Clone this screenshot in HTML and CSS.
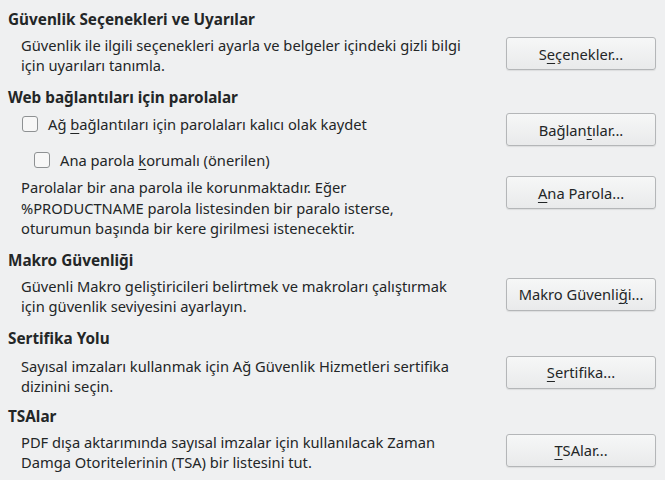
FILE: index.html
```html
<!DOCTYPE html>
<html lang="tr">
<head>
<meta charset="utf-8">
<link rel="stylesheet" href="styles.css">
</head>
<body>
<div class="page">
  <section class="sec s1">
    <h2 class="head">Güvenlik Seçenekleri ve Uyarılar</h2>
    <div class="row">
      <p class="desc">Güvenlik ile ilgili seçenekleri ayarla ve belgeler içindeki gizli bilgi<br>için uyarıları tanımla.</p>
      <button class="btn b1">S<u>e</u>çenekler...</button>
    </div>
  </section>

  <section class="sec s2">
    <h2 class="head">Web bağlantıları için parolalar</h2>
    <div class="row r-cb1">
      <label class="check c1"><span class="box"></span><span class="lbl">Ağ <u>b</u>ağlantıları için parolaları kalıcı olak kaydet</span></label>
      <button class="btn">Bağlan<u>t</u>ılar...</button>
    </div>
    <div class="row r-cb2">
      <label class="check c2"><span class="box"></span><span class="lbl">Ana parola <u>k</u>orumalı (önerilen)</span></label>
    </div>
    <div class="row r-para">
      <p class="desc para">Parolalar bir ana parola ile korunmaktadır. Eğer<br>%PRODUCTNAME parola listesinden bir paralo isterse,<br>oturumun başında bir kere girilmesi istenecektir.</p>
      <button class="btn"><u>A</u>na Parola...</button>
    </div>
  </section>

  <section class="sec s3">
    <h2 class="head">Makro Güvenliği</h2>
    <div class="row">
      <p class="desc">Güvenli Makro geliştiricileri belirtmek ve makroları çalıştırmak<br>için güvenlik seviyesini ayarlayın.</p>
      <button class="btn">Makro Güvenli<u>ğ</u>i...</button>
    </div>
  </section>

  <section class="sec s4">
    <h2 class="head">Sertifika Yolu</h2>
    <div class="row">
      <p class="desc">Sayısal imzaları kullanmak için Ağ Güvenlik Hizmetleri sertifika<br>dizinini seçin.</p>
      <button class="btn"><u>S</u>ertifika...</button>
    </div>
  </section>

  <section class="sec s5">
    <h2 class="head">TSAlar</h2>
    <div class="row">
      <p class="desc">PDF dışa aktarımında sayısal imzalar için kullanılacak Zaman<br>Damga Otoritelerinin (TSA) bir listesini tut.</p>
      <button class="btn"><u>T</u>SAlar...</button>
    </div>
  </section>
</div>
</body>
</html>
```

FILE: styles.css
```css
html, body {
  margin: 0;
  padding: 0;
  background: #eff0f1;
}
body {
  width: 665px;
  height: 480px;
  overflow: hidden;
  font-family: "Noto Sans", "Open Sans", "DejaVu Sans", sans-serif;
  font-size: 14.7px;
  line-height: 20px;
  color: #232627;
}
.page {
  padding: 9px 9px 0 8px;
}
.sec {
  margin: 0 0 12px 0;
}
.head {
  margin: 0;
  font-size: 15.3px;
  font-weight: bold;
  line-height: 20px;
}
.row {
  display: flex;
  justify-content: space-between;
  align-items: flex-start;
}
.s1 .row { margin-top: 6px; }
.desc {
  margin: 0 0 0 13px;
}
.s1 .btn, .s3 .btn, .s5 .btn { margin-top: 2px; }
.btn {
  flex: none;
  width: 150px;
  height: 33px;
  box-sizing: border-box;
  border: 1px solid #b4b6b8;
  border-radius: 3px;
  background: linear-gradient(#f6f7f7, #e9eaeb);
  box-shadow: 0 1px 1px rgba(0,0,0,0.08);
  font-family: inherit;
  font-size: 14.7px;
  color: #232627;
  padding: 0;
  margin: 0;
}
.btn u, .check u {
  text-underline-offset: 3px;
}
.check {
  display: flex;
  align-items: center;
  gap: 10px;
}
.box {
  width: 16px;
  height: 16px;
  box-sizing: border-box;
  border: 1px solid #8e9193;
  border-radius: 3px;
  background: #f7f7f7;
  flex: none;
}
.r-cb1 { margin-top: 6px; }
.c1 { margin: 1px 0 0 14px; }
.r-cb2 { margin-top: 4px; }
.c2 { margin-left: 26px; }
.r-para { margin-top: 6px; }
.para { margin-top: 1px; line-height: 20.5px; }
.s2 { margin-bottom: 11px; }
.s3 .row, .s5 .row { margin-top: 6px; }
.s4 .row { margin-top: 8px; }
.s4 .btn { margin-top: 0; }
.s3 { margin-bottom: 12px; }
.s4 { margin-bottom: 10px; }
```
